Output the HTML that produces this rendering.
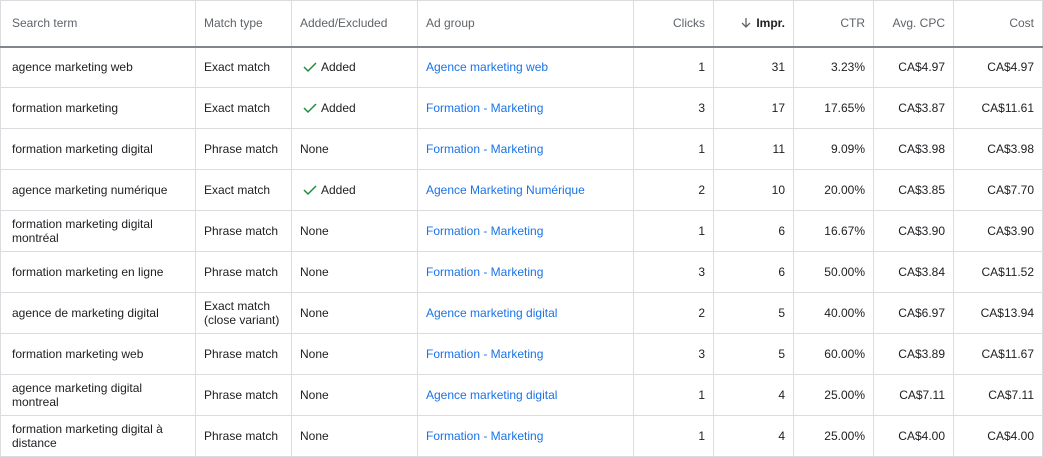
<!DOCTYPE html>
<html><head><meta charset="utf-8"><style>
body{margin:0;background:#fff;width:1043px;height:457px;overflow:hidden;font-family:"Liberation Sans",Arial,sans-serif;font-size:12px;color:#202124}
table{border-collapse:collapse;table-layout:fixed;width:1042px;position:absolute;left:0;top:0}
td,th{border:1px solid #dadce0;padding:0 8px 0 8px;line-height:14px;box-sizing:border-box}
td:first-child,th:first-child{padding-left:11px}
th{height:46px;font-weight:normal;color:#5f6368;text-align:left;border-bottom:2px solid #80868b}
td{height:41px}
.r{text-align:right;padding-right:8px}
a{color:#1a73e8;text-decoration:none}
.chk{display:inline-block;vertical-align:-2px;margin-right:4px}
td.c{padding-left:11px}
</style></head><body>
<table>
<colgroup><col style="width:195px"><col style="width:96px"><col style="width:126px"><col style="width:216px"><col style="width:80px"><col style="width:80px"><col style="width:80px"><col style="width:80px"><col style="width:89px"></colgroup>
<tr><th>Search term</th><th>Match type</th><th>Added/Excluded</th><th>Ad group</th><th class="r">Clicks</th><th class="r" style="color:#202124;font-weight:bold"><svg width="12" height="12" viewBox="0 0 12 12" style="vertical-align:-2px;margin-right:4px"><path d="M6 1v9M2 6l4 4 4-4" stroke="#5f6368" stroke-width="1.3" fill="none"/></svg>Impr.</th><th class="r">CTR</th><th class="r">Avg. CPC</th><th class="r">Cost</th></tr>
<tr><td>agence marketing web</td><td>Exact match</td><td class="c"><svg class="chk" width="14" height="12" viewBox="0 0 14 12"><path d="M1 6l4 4 8-8" stroke="#1e8e3e" stroke-width="1.5" fill="none"/></svg>Added</td><td><a>Agence marketing web</a></td><td class="r">1</td><td class="r">31</td><td class="r">3.23%</td><td class="r">CA$4.97</td><td class="r">CA$4.97</td></tr>
<tr><td>formation marketing</td><td>Exact match</td><td class="c"><svg class="chk" width="14" height="12" viewBox="0 0 14 12"><path d="M1 6l4 4 8-8" stroke="#1e8e3e" stroke-width="1.5" fill="none"/></svg>Added</td><td><a>Formation - Marketing</a></td><td class="r">3</td><td class="r">17</td><td class="r">17.65%</td><td class="r">CA$3.87</td><td class="r">CA$11.61</td></tr>
<tr><td>formation marketing digital</td><td>Phrase match</td><td>None</td><td><a>Formation - Marketing</a></td><td class="r">1</td><td class="r">11</td><td class="r">9.09%</td><td class="r">CA$3.98</td><td class="r">CA$3.98</td></tr>
<tr><td>agence marketing numérique</td><td>Exact match</td><td class="c"><svg class="chk" width="14" height="12" viewBox="0 0 14 12"><path d="M1 6l4 4 8-8" stroke="#1e8e3e" stroke-width="1.5" fill="none"/></svg>Added</td><td><a>Agence Marketing Numérique</a></td><td class="r">2</td><td class="r">10</td><td class="r">20.00%</td><td class="r">CA$3.85</td><td class="r">CA$7.70</td></tr>
<tr><td>formation marketing digital montréal</td><td>Phrase match</td><td>None</td><td><a>Formation - Marketing</a></td><td class="r">1</td><td class="r">6</td><td class="r">16.67%</td><td class="r">CA$3.90</td><td class="r">CA$3.90</td></tr>
<tr><td>formation marketing en ligne</td><td>Phrase match</td><td>None</td><td><a>Formation - Marketing</a></td><td class="r">3</td><td class="r">6</td><td class="r">50.00%</td><td class="r">CA$3.84</td><td class="r">CA$11.52</td></tr>
<tr><td>agence de marketing digital</td><td>Exact match (close variant)</td><td>None</td><td><a>Agence marketing digital</a></td><td class="r">2</td><td class="r">5</td><td class="r">40.00%</td><td class="r">CA$6.97</td><td class="r">CA$13.94</td></tr>
<tr><td>formation marketing web</td><td>Phrase match</td><td>None</td><td><a>Formation - Marketing</a></td><td class="r">3</td><td class="r">5</td><td class="r">60.00%</td><td class="r">CA$3.89</td><td class="r">CA$11.67</td></tr>
<tr><td>agence marketing digital montreal</td><td>Phrase match</td><td>None</td><td><a>Agence marketing digital</a></td><td class="r">1</td><td class="r">4</td><td class="r">25.00%</td><td class="r">CA$7.11</td><td class="r">CA$7.11</td></tr>
<tr><td>formation marketing digital à distance</td><td>Phrase match</td><td>None</td><td><a>Formation - Marketing</a></td><td class="r">1</td><td class="r">4</td><td class="r">25.00%</td><td class="r">CA$4.00</td><td class="r">CA$4.00</td></tr>
</table>
</body></html>
